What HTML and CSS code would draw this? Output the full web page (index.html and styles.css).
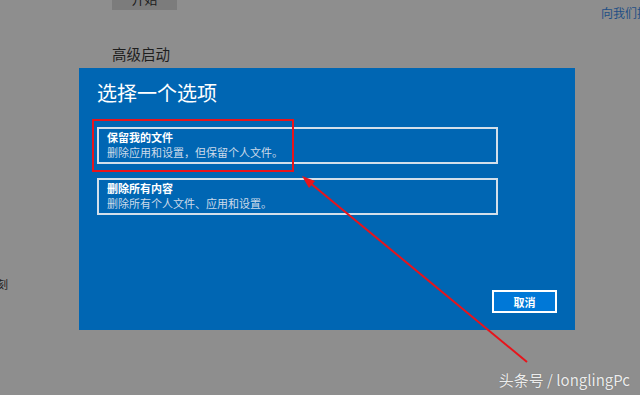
FILE: index.html
```html
<!DOCTYPE html>
<html lang="zh-CN">
<head>
    <meta charset="UTF-8">
    <meta name="viewport" content="width=device-width, initial-scale=1.0">
    <title>恢复选项</title>
    <link rel="stylesheet" href="styles.css">
</head>
<body>
    <div class="settings">
        <div class="settings-top">
            <div class="start-btn">开始</div>
            <div class="feedback">向我们提供反馈</div>
        </div>
        <h2 class="heading">高级启动</h2>
        <div class="side-note">刻</div>
    </div>

    <div class="dialog">
        <h1 class="dialog-title">选择一个选项</h1>
        <div class="option">
            <div class="option-name">保留我的文件</div>
            <div class="option-desc">删除应用和设置，但保留个人文件。</div>
        </div>
        <div class="option">
            <div class="option-name">删除所有内容</div>
            <div class="option-desc">删除所有个人文件、应用和设置。</div>
        </div>
        <div class="dialog-actions">
            <button class="cancel-btn">取消</button>
        </div>
    </div>

    <!-- 标注：红框和箭头 -->
    <svg class="marks" width="640" height="395" viewBox="0 0 640 395">
        <rect x="93" y="120" width="200" height="51" fill="none" stroke="#e8141b" stroke-width="2"/>
        <line x1="527" y1="362" x2="309" y2="182" stroke="#e8141b" stroke-width="2"/>
        <polygon points="302,176 315,181 309,188" fill="#e8141b"/>
    </svg>

    <div class="watermark">头条号 / longlingPc</div>
</body>
</html>
```

FILE: styles.css
```css
body {
    margin: 0;
    width: 640px;
    height: 395px;
    overflow: hidden;
    position: relative;
    background: #8e8e8e;
    font-family: "Noto Sans CJK SC", "Noto Sans", sans-serif;
}

.settings {
    padding-left: 112px;
}

.settings-top {
    display: flex;
    align-items: flex-start;
}

.start-btn {
    flex-shrink: 0;
    width: 65px;
    height: 23px;
    margin-top: -13px;
    background: #7c7c7c;
    color: #1a1a1a;
    font-size: 13px;
    line-height: 23px;
    text-align: center;
}

.feedback {
    flex-shrink: 0;
    margin-left: 424px;
    margin-top: 5px;
    font-size: 12px;
    line-height: 16px;
    color: #1f4e85;
    white-space: nowrap;
}

.heading {
    margin: 23px 0 0;
    font-size: 14.5px;
    line-height: 20px;
    font-weight: normal;
    color: #1e1e1e;
}

.side-note {
    margin: 212px 0 0 -115px;
    font-size: 11px;
    line-height: 16px;
    color: #1e1e1e;
}

.dialog {
    position: absolute;
    left: 79px;
    top: 68px;
    width: 496px;
    height: 262px;
    box-sizing: border-box;
    padding: 11px 18px 17px;
    background: #0066b3;
    color: white;
    display: flex;
    flex-direction: column;
}

.dialog-title {
    margin: 0 0 20px;
    font-size: 20px;
    line-height: 28px;
    font-weight: normal;
}

.option {
    width: 401px;
    box-sizing: border-box;
    border: 2px solid #d3dfea;
    padding: 1px 8px 2px;
    margin-bottom: 14px;
    font-size: 11px;
    line-height: 15px;
}

.option-name {
    font-weight: bold;
}

.option-desc {
    color: #cbdaea;
}

.dialog-actions {
    margin-top: auto;
    display: flex;
    justify-content: flex-end;
}

.cancel-btn {
    width: 65px;
    height: 23px;
    padding: 0;
    border: 2px solid white;
    background: #0078d7;
    color: white;
    font-family: inherit;
    font-size: 11px;
    font-weight: bold;
}

.marks {
    position: absolute;
    left: 0;
    top: 0;
    pointer-events: none;
}

.watermark {
    position: absolute;
    right: 10px;
    bottom: 5px;
    font-size: 15px;
    line-height: 20px;
    color: #ececec;
    text-shadow: 0 0 1px rgba(0, 0, 0, 0.3);
}
```
